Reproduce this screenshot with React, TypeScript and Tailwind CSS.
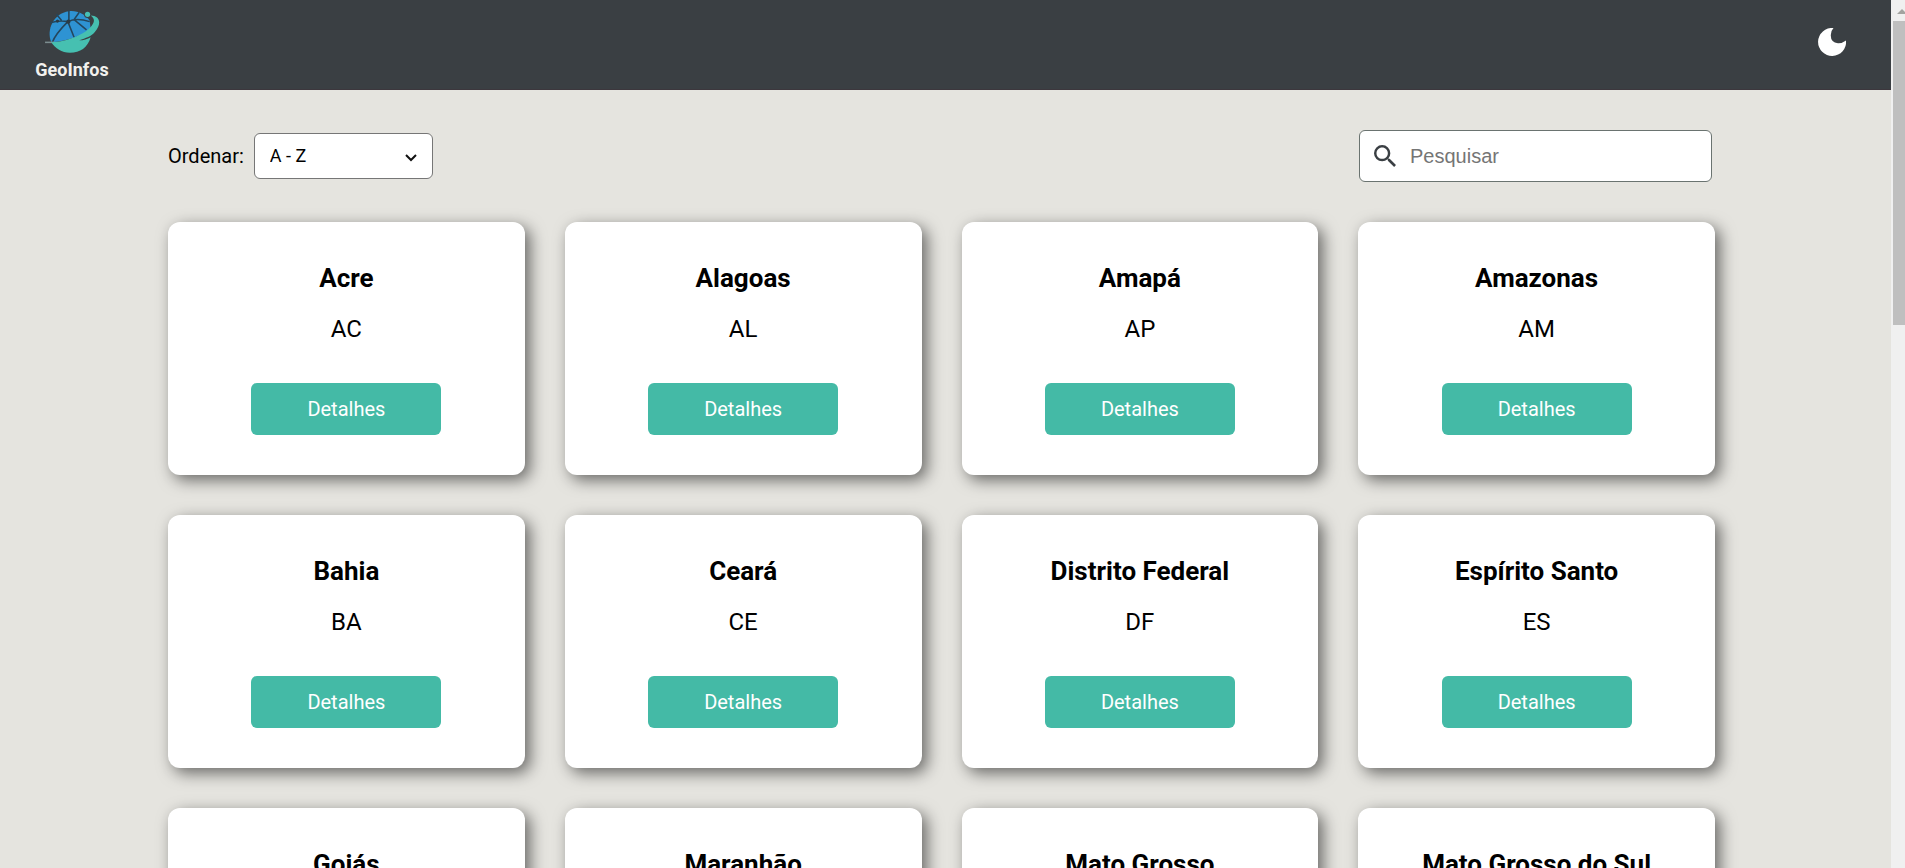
import { useState } from "react";

const states: [string, string][] = [
  ["Acre", "AC"],
  ["Alagoas", "AL"],
  ["Amapá", "AP"],
  ["Amazonas", "AM"],
  ["Bahia", "BA"],
  ["Ceará", "CE"],
  ["Distrito Federal", "DF"],
  ["Espírito Santo", "ES"],
  ["Goiás", "GO"],
  ["Maranhão", "MA"],
  ["Mato Grosso", "MT"],
  ["Mato Grosso do Sul", "MS"],
];

function Logo() {
  return (
    <a href="#" className="flex w-20 flex-col items-center">
      <svg viewBox="-1 0 54 42" className="h-[44px] w-[56px]" aria-hidden="true">
        <path d="M6 31C1 19 8 3 23 1c8-1 16 3 20 9l1 8C34 26 21 29 6 31Z" fill="#2e93d3" />
        <path
          d="M23 0v11M22 11C16 17 10 23 7 31M22 11c2 5 4 10 6 15M22 11C17 10 12 10 5 12M22 11c6-3 12-3 21 0M33 2l-5 7 12 10M11 4l5 6"
          fill="none"
          stroke="#24465c"
          strokeWidth="1.500"
        />
        <circle cx="22.500" cy="11" r="2" fill="#2b3a44" />
        <circle cx="12" cy="10.500" r="1.500" fill="#2b3a44" />
        <path d="M0 31h9" stroke="#7c8d8f" strokeWidth="1.500" />
        <path
          d="M6 31c17-1 33-8 39-16 3-4 3-7-1-10 9 0 11 8 4 16-3 4-9 6-15 8 4 0 8-1 11-3-3 10-10 15-20 15-8 0-14-4-18-10Z"
          fill="#46c0b1"
        />
        <circle cx="41" cy="4" r="3.500" fill="#3a3f43" />
        <circle cx="41" cy="4" r="2.500" fill="#46bfb4" />
      </svg>
      <span className="mt-1 text-lg leading-6 font-bold text-[#f2f1ee]">GeoInfos</span>
    </a>
  );
}

function Card({ name, code }: { name: string; code: string }) {
  return (
    <li className="flex flex-col items-center rounded-xl bg-white p-10 shadow-[5px_5px_16px_rgba(0,0,0,0.55)]">
      <h2 className="text-[26px] leading-8 font-bold">{name}</h2>
      <p className="mt-5 text-2xl leading-[30px]">{code}</p>
      <button type="button" className="mt-[39px] h-[52px] w-[190px] rounded-md bg-[#44baa6] text-xl text-white">
        Detalhes
      </button>
    </li>
  );
}

export default function App() {
  const [order, setOrder] = useState("asc");
  const [query, setQuery] = useState("");
  const shown = states.filter(([name]) => name.toLowerCase().includes(query.toLowerCase()));
  if (order === "desc") shown.reverse();

  return (
    <div className="flex h-screen bg-[#e5e4df] font-['Roboto',sans-serif] text-black">
      <div className="min-w-0 flex-1 overflow-y-auto [scrollbar-width:none]">
        <header className="flex h-[90px] items-start justify-between border-b border-[#3c373d] bg-[#3a3f43] pt-2.5 pr-[45px] pl-8">
          <Logo />
          <button type="button" aria-label="Tema escuro" className="mt-[18px]">
            <svg viewBox="0 0 28 28" className="h-7 w-7" aria-hidden="true">
              <path d="M15.500 0A14 14 0 1 0 28 12.500Q24 15.500 20 15.300Q12.500 14.500 12.800 7Q13 2.500 15.500 0Z" fill="#fff" />
            </svg>
          </button>
        </header>
        <main className="pr-44 pb-10 pl-42">
          <div className="flex items-center justify-between pt-10 pr-[3px] pb-10">
            <div className="flex items-center gap-2.5">
              <label htmlFor="order" className="text-xl">
                Ordenar:
              </label>
              <div className="grid items-center">
                <select
                  id="order"
                  value={order}
                  onChange={(e) => setOrder(e.target.value)}
                  className="col-start-1 row-start-1 h-[46px] w-[179px] appearance-none rounded-md border border-[#767676] bg-white px-[15px] text-lg"
                >
                  <option value="asc">A - Z</option>
                  <option value="desc">Z - A</option>
                </select>
                <svg
                  viewBox="0 0 12 8"
                  className="pointer-events-none col-start-1 row-start-1 mt-1 mr-4 h-2 w-3 justify-self-end"
                  aria-hidden="true"
                >
                  <path d="M1 1l5 5 5-5" fill="none" stroke="#111" strokeWidth="2" />
                </svg>
              </div>
            </div>
            <label className="flex h-[52px] w-[353px] items-center gap-3.5 rounded-md border border-[#6a7370] bg-white pr-4 pl-3.5">
              <svg viewBox="3 3 17.500 17.500" className="h-[22px] w-[22px] shrink-0" aria-hidden="true">
                <path
                  d="M15.500 14h-.79l-.28-.27A6.471 6.471 0 0 0 16 9.500 6.500 6.500 0 1 0 9.500 16c1.610 0 3.090-.59 4.230-1.570l.27.28v.79l5 4.990L20.490 19l-4.990-5zm-6 0C7.010 14 5 11.990 5 9.500S7.010 5 9.500 5 14 7.010 14 9.500 11.990 14 9.500 14z"
                  fill="#3a3f43"
                />
              </svg>
              <input
                type="text"
                aria-label="Pesquisar"
                placeholder="Pesquisar"
                value={query}
                onChange={(e) => setQuery(e.target.value)}
                className="min-w-0 flex-1 bg-transparent font-['Liberation_Sans',sans-serif] text-xl outline-none placeholder:text-[#757575]"
              />
            </label>
          </div>
          <ul className="grid grid-cols-4 gap-10">
            {shown.map(([name, code]) => (
              <Card key={code} name={name} code={code} />
            ))}
          </ul>
        </main>
      </div>
      <div className="flex w-3.5 shrink-0 flex-col overflow-hidden bg-[#f0f0f0] pl-0.5" aria-hidden="true">
        <svg viewBox="0 0 12 21" className="h-[21px] w-3 shrink-0">
          <path d="M4 14l5-5 5 5Z" fill="#a3a3a0" />
        </svg>
        <div className="h-[304px] w-full shrink-0 bg-[#bfbfbf]" />
      </div>
    </div>
  );
}
